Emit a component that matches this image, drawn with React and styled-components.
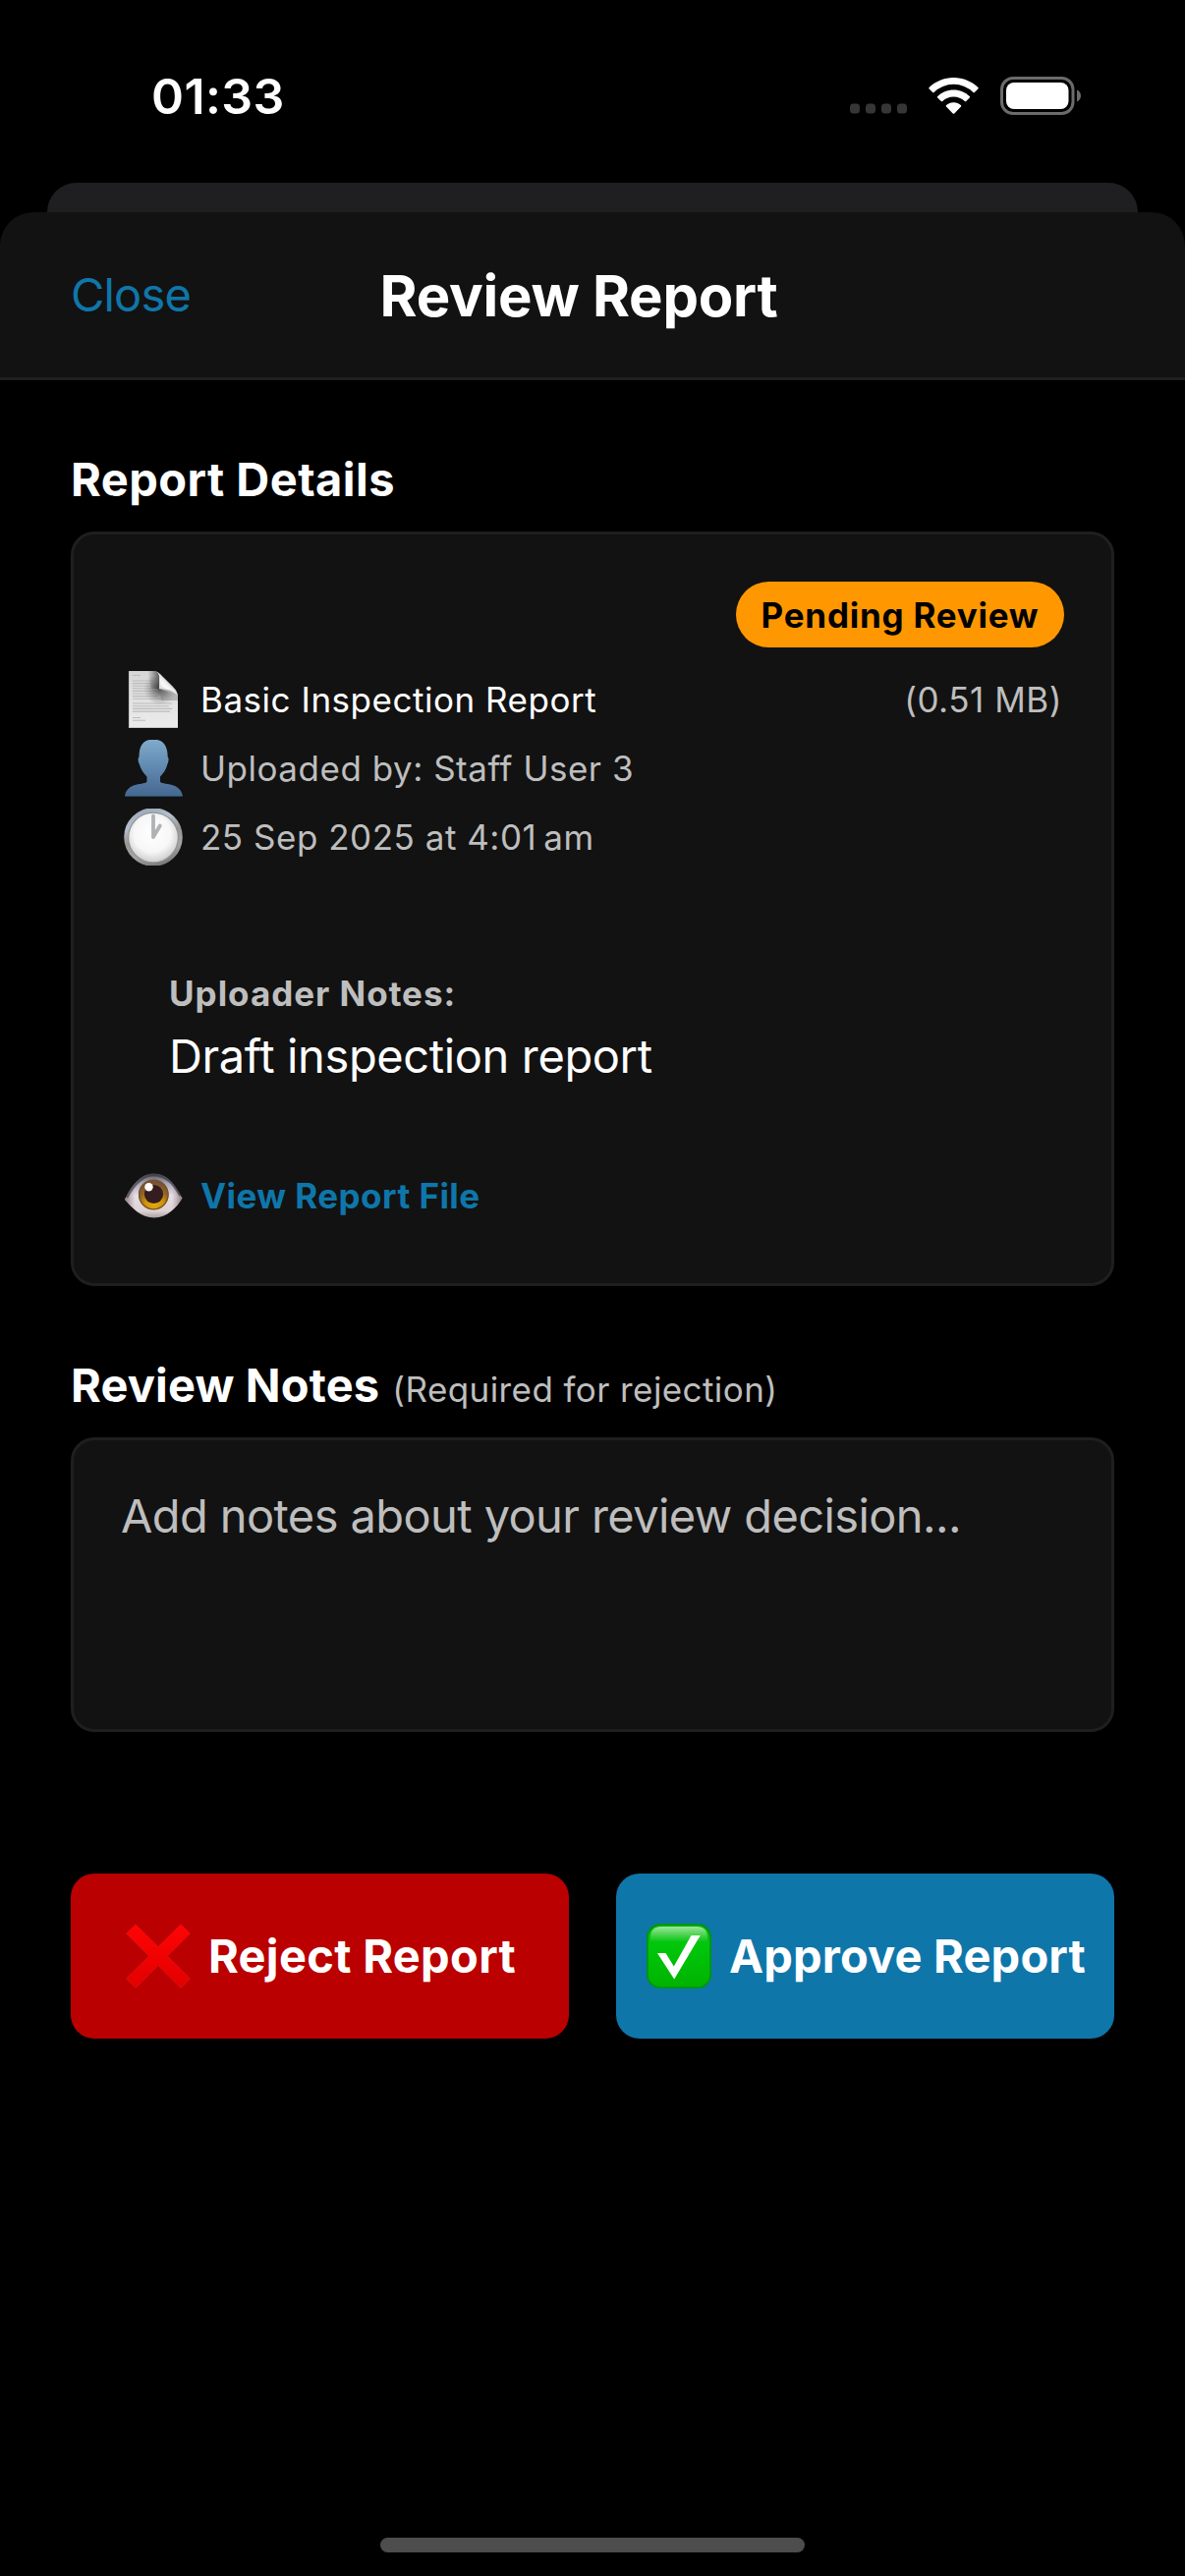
import React from "react";
import styled, { createGlobalStyle } from "styled-components";

const c = {
  bg: "#000000",
  surface: "#121212",
  border: "#1f1f1f",
  sheet: "#1f1f21",
  text: "#ffffff",
  muted: "#bebebe",
  accent: "#0f76aa",
  danger: "#ba0000",
  warning: "#ff9800",
};

const GlobalStyle = createGlobalStyle`
  * { box-sizing: border-box; }
  body {
    margin: 0;
    background: ${c.bg};
    color: ${c.text};
    font-family: Inter, "Liberation Sans", sans-serif;
  }
`;

const Screen = styled.div`
  display: flex;
  flex-direction: column;
  width: 1206px;
  height: 2622px;
  overflow: hidden;
  background: ${c.bg};
`;

const StatusBar = styled.div`
  display: flex;
  align-items: center;
  justify-content: space-between;
  height: 186px;
  padding: 9px 106px 0 154px;
`;

const Clock = styled.span`
  font-size: 50px;
  line-height: 60px;
  font-weight: 600;
  letter-spacing: 0.4px;
`;

const StatusIcons = styled.div`
  display: flex;
  align-items: center;
  gap: 22px;

  svg { display: block; }
`;

const BackSheet = styled.div`
  height: 30px;
  margin: 0 48px;
  border-radius: 30px 30px 0 0;
  background: ${c.sheet};
`;

const Header = styled.header`
  display: flex;
  align-items: center;
  justify-content: space-between;
  height: 171px;
  padding: 0 72px;
  border-bottom: 3px solid ${c.border};
  border-radius: 34px 34px 0 0;
  background: ${c.surface};
`;

const CloseButton = styled.button`
  padding: 0;
  border: 0;
  background: none;
  color: ${c.accent};
  font: inherit;
  font-size: 47px;
  line-height: 60px;
  letter-spacing: -0.8px;
`;

const Title = styled.h1`
  margin: 0;
  padding-top: 1px;
  font-size: 58px;
  line-height: 72px;
  font-weight: 700;
  letter-spacing: -0.25px;
`;

const HeaderSpacer = styled.div`
  width: 150px;
`;

const Body = styled.main`
  display: flex;
  flex: 1;
  flex-direction: column;
  padding: 71px 72px 0;
`;

const SectionTitle = styled.h2`
  margin: 0 0 23px;
  font-size: 47px;
  line-height: 60px;
  font-weight: 700;
  letter-spacing: ${(p) => p.$tracking};
`;

const Hint = styled.span`
  margin-left: 13px;
  color: ${c.muted};
  font-size: 35px;
  line-height: 1;
  font-weight: 400;
  letter-spacing: 0.41px;
`;

const Card = styled.section`
  display: flex;
  flex-direction: column;
  height: 768px;
  margin-bottom: 71px;
  padding: 48px;
  border: 3px solid ${c.border};
  border-radius: 24px;
  background: ${c.surface};
`;

const Badge = styled.div`
  display: flex;
  justify-content: center;
  align-self: flex-end;
  width: 334px;
  height: 67px;
  margin-bottom: 18px;
  border-radius: 34px;
  background: ${c.warning};
  color: #000;
  font-size: 35px;
  line-height: 68px;
  font-weight: 700;
  letter-spacing: 0.76px;
`;

const Row = styled.div`
  display: flex;
  align-items: center;
  height: 70px;
  padding-left: 3px;
  font-size: 35px;
  line-height: 70px;
  font-weight: ${(p) => (p.$link ? 700 : 400)};
  letter-spacing: ${(p) => (p.$link ? "0.45px" : "0.52px")};
  color: ${(p) => (p.$link ? c.accent : p.$primary ? c.text : c.muted)};
`;

const RowIcon = styled.svg`
  flex: none;
  width: 60px;
  height: 58px;
  margin-right: 18px;
`;

const FileSize = styled.span`
  margin-left: auto;
  padding-right: 2px;
  color: ${c.muted};
`;

const UploaderNotes = styled.div`
  display: flex;
  flex-direction: column;
  margin: 97px 0 71px;
  padding-left: 49px;
`;

const NotesLabel = styled.span`
  color: ${c.muted};
  font-size: 35px;
  line-height: 54px;
  font-weight: 700;
  letter-spacing: 0.98px;
`;

const NotesText = styled.span`
  padding-top: 1px;
  font-size: 47px;
  line-height: 72px;
  letter-spacing: -0.38px;
`;

const NotesInput = styled.textarea`
  display: block;
  width: 100%;
  height: 300px;
  margin: 0 0 144px;
  padding: 47px 48px;
  border: 3px solid ${c.border};
  border-radius: 24px;
  outline: 0;
  resize: none;
  background: ${c.surface};
  color: ${c.text};
  font: inherit;
  font-size: 47px;
  line-height: 60px;
  letter-spacing: -0.6px;

  &::placeholder {
    color: ${c.muted};
    opacity: 1;
  }
`;

const Actions = styled.div`
  display: grid;
  grid-template-columns: 1fr 1fr;
  gap: 48px;
`;

const ActionButton = styled.button`
  display: flex;
  align-items: center;
  justify-content: center;
  gap: 18px;
  height: 168px;
  padding: 0 0 0 2px;
  border: 0;
  border-radius: 24px;
  background: ${(p) => (p.$danger ? c.danger : c.accent)};
  color: ${c.text};
  font: inherit;
  font-size: 47px;
  line-height: 60px;
  font-weight: 700;
  letter-spacing: ${(p) => (p.$danger ? "0.32px" : "0.15px")};
`;

const HomeIndicator = styled.div`
  align-self: center;
  width: 432px;
  height: 15px;
  margin-bottom: 24px;
  border-radius: 8px;
  background: #4d4d4d;
`;

const SignalIcon = () => (
  <svg width="58" height="37" viewBox="0 0 58 37">
    {[0, 16, 32, 48].map((x) => (
      <rect key={x} x={x} y="26.5" width="10" height="10" rx="3.5" fill="#363636" />
    ))}
  </svg>
);

const WifiIcon = () => (
  <svg width="51" height="37" viewBox="0 0 51 37" fill="#fff">
    <path d="M25.5 0C35.2 0 44 3.8 50.4 10.1Q51 10.8 50.4 11.5L46.9 15Q46.2 15.6 45.5 15A28.6 28.6 0 0 0 5.5 15Q4.8 15.6 4.1 15L.6 11.5Q0 10.8.6 10.1C7 3.8 15.8 0 25.5 0Z" />
    <path d="M25.5 12.5C31.9 12.5 37.6 15 41.8 19.1Q42.4 19.8 41.8 20.4L38.2 24Q37.5 24.6 36.8 24A16.3 16.3 0 0 0 14.2 24Q13.5 24.6 12.8 24L9.2 20.4Q8.6 19.8 9.2 19.1C13.4 15 19.1 12.5 25.5 12.5Z" />
    <path d="M25.5 25.2C28.4 25.2 31 26.3 32.9 28Q33.6 28.7 33 29.4L26.3 36.4Q25.5 37.2 24.7 36.4L18 29.4Q17.4 28.7 18.1 28C20 26.3 22.6 25.2 25.5 25.2Z" />
  </svg>
);

const BatteryIcon = () => (
  <svg width="82" height="39" viewBox="0 0 82 39">
    <rect x="1.5" y="1.5" width="72.5" height="36" rx="11.5" fill="none" stroke="#6b6b6b" strokeWidth="3" />
    <rect x="6" y="6" width="63.5" height="27" rx="8" fill="#fff" />
    <path d="M78 13.5C80.4 14.6 82 16.7 82 19.5S80.4 24.4 78 25.5Z" fill="#6b6b6b" />
  </svg>
);

const DocumentIcon = () => (
  <RowIcon viewBox="0 0 60 58">
    <defs>
      <linearGradient id="page" x1="0" y1="0" x2="0" y2="1">
        <stop offset="0" stopColor="#d6d6d6" />
        <stop offset="1" stopColor="#ececec" />
      </linearGradient>
      <linearGradient id="curl" x1="0.1" y1="0.9" x2="0.6" y2="0.3">
        <stop offset="0" stopColor="#bdbdbd" />
        <stop offset="0.5" stopColor="#fafafa" />
        <stop offset="1" stopColor="#dcdcdc" />
      </linearGradient>
      <radialGradient id="curlShade" cx="37" cy="18" r="17" gradientUnits="userSpaceOnUse">
        <stop offset="0" stopColor="#333" stopOpacity="0.85" />
        <stop offset="0.4" stopColor="#555" stopOpacity="0.6" />
        <stop offset="1" stopColor="#888" stopOpacity="0" />
      </radialGradient>
      <linearGradient id="topShade" x1="24" y1="0" x2="37" y2="0" gradientUnits="userSpaceOnUse">
        <stop offset="0" stopColor="#555" stopOpacity="0" />
        <stop offset="1" stopColor="#333" stopOpacity="0.85" />
      </linearGradient>
    </defs>
    <path d="M5 0H30C35 0 37 3 42 8L50 16Q55 21 55 26V58H5Z" fill="url(#page)" />
    <g stroke="#bcbcbc" strokeWidth="1.1">
      <path d="M9 4.500H17M9 10H31M9 12.600H30M9 15.200H31M9 17.800H30M9 20.400H33M9 23H31M9 25.600H34M9 28.200H40M9 33H49M9 35.700H46M9 38.400H49M9 41.100H47M9 47.500H17M9 50.300H22" />
    </g>
    <path d="M24 0H30C34 0 36 3 36 6V18H28Z" fill="url(#topShade)" />
    <path d="M20 6H36V18L55 24V36H20Z" fill="url(#curlShade)" />
    <path d="M37 18Q47 17 55 25V30H38Z" fill="#777" opacity="0.4" />
    <path d="M34 1Q38 4 37 18Q47 17 54.5 24Z" fill="url(#curl)" />
    <path d="M5.4 0V57.5H55" fill="none" stroke="#bfbfbf" strokeWidth="0.8" />
  </RowIcon>
);

const PersonIcon = () => (
  <RowIcon viewBox="0 0 60 58">
    <defs>
      <linearGradient id="person" x1="0" y1="0" x2="0" y2="1">
        <stop offset="0" stopColor="#80aacb" />
        <stop offset="0.4" stopColor="#668fb4" />
        <stop offset="1" stopColor="#456791" />
      </linearGradient>
    </defs>
    <path
      d="M26 0H34C41 1.5 44.5 7 44.7 17.5C46 18.2 45.7 22.5 44.5 24.5C43 30.5 40 34.5 37 37.500V42.5C38.5 46.5 57.5 42 60 57.5H1C3.5 42 22 46.5 23.5 42.5V37.5C20.5 34.5 17.5 30.5 15.7 24.5C14.4 22.5 14.2 18.2 15.5 17.5C15.6 7 19 1.5 26 0Z"
      fill="url(#person)"
    />
    <path d="M2 56.7H59" stroke="#3b7290" strokeWidth="1" />
  </RowIcon>
);

const ClockIcon = () => (
  <RowIcon viewBox="0 0 60 58">
    <defs>
      <linearGradient id="rim" x1="0.3" y1="0" x2="0.6" y2="1">
        <stop offset="0" stopColor="#99a5b8" />
        <stop offset="0.25" stopColor="#b7c0ce" />
        <stop offset="0.5" stopColor="#999694" />
        <stop offset="0.75" stopColor="#a8a4a1" />
        <stop offset="1" stopColor="#777" />
      </linearGradient>
      <radialGradient id="face" cx="0.48" cy="0.42" r="0.58">
        <stop offset="0" stopColor="#fff" />
        <stop offset="0.65" stopColor="#f7f7f7" />
        <stop offset="1" stopColor="#cfcfcf" />
      </radialGradient>
    </defs>
    <circle cx="30" cy="29" r="29.8" fill="url(#rim)" />
    <circle cx="30" cy="29.5" r="26" fill="#8f9399" />
    <circle cx="30" cy="29.5" r="24.8" fill="url(#face)" />
    <path d="M30 7.5V29L36.8 17.5" fill="none" stroke="#b0b3b5" strokeWidth="3.8" strokeLinecap="round" strokeLinejoin="round" />
  </RowIcon>
);

const EyeIcon = () => (
  <RowIcon viewBox="0 0 60 58">
    <defs>
      <linearGradient id="lid" x1="0" y1="0" x2="0" y2="1">
        <stop offset="0" stopColor="#55545c" />
        <stop offset="0.22" stopColor="#a9a5b6" />
        <stop offset="0.5" stopColor="#e6dfe5" />
        <stop offset="0.85" stopColor="#ddd2d4" />
        <stop offset="1" stopColor="#aaa0a2" />
      </linearGradient>
      <linearGradient id="lidSide" x1="0" y1="0" x2="1" y2="0">
        <stop offset="0" stopColor="#694b50" stopOpacity="0.7" />
        <stop offset="0.18" stopColor="#8b7480" stopOpacity="0" />
        <stop offset="0.82" stopColor="#8b7480" stopOpacity="0" />
        <stop offset="1" stopColor="#694b50" stopOpacity="0.7" />
      </linearGradient>
      <radialGradient id="iris" cx="0.52" cy="0.8" r="0.72">
        <stop offset="0" stopColor="#e8ac0c" />
        <stop offset="0.4" stopColor="#d0930c" />
        <stop offset="0.7" stopColor="#8f6425" />
        <stop offset="1" stopColor="#75503b" />
      </radialGradient>
    </defs>
    <path d="M1 33C7 21 16 6.5 30 6.5C46 6.5 52 19 59.5 31.5C54 41 44 51.5 31 51.5C17 51.5 8 41 1 33Z" fill="url(#lid)" />
    <path d="M1 33C7 21 16 6.5 30 6.5C46 6.5 52 19 59.5 31.5C54 41 44 51.5 31 51.5C17 51.5 8 41 1 33Z" fill="url(#lidSide)" />
    <path d="M3 31C9 20 17 8.5 30 8C44 8 51 18 57.5 29" fill="none" stroke="#34333a" strokeWidth="2.5" opacity="0.65" />
    <circle cx="30.3" cy="28" r="15.3" fill="url(#iris)" />
    <circle cx="30.3" cy="28" r="14.8" fill="none" stroke="#785425" strokeWidth="1.2" />
    <circle cx="30.5" cy="27.5" r="9.6" fill="#351c1e" />
    <circle cx="25.5" cy="20.3" r="4.2" fill="#fff" />
  </RowIcon>
);

const CrossIcon = () => (
  <svg width="66" height="66" viewBox="0 0 66 66">
    <defs>
      <linearGradient id="cross" x1="0" y1="0" x2="0" y2="1">
        <stop offset="0" stopColor="#ff0404" />
        <stop offset="1" stopColor="#e20000" />
      </linearGradient>
    </defs>
    <path
      d="M.5 10L10 .7L33 23.5L56 .7L65.500 10L42.5 33L65.5 56L56 65.5L33 42.5L10 65.5L.5 56L23.5 33Z"
      fill="url(#cross)"
      stroke="#e31a1a"
      strokeWidth="0.6"
    />
  </svg>
);

const CheckIcon = () => (
  <svg width="66" height="66" viewBox="0 0 66 66">
    <defs>
      <linearGradient id="tile" x1="0" y1="0" x2="0" y2="1">
        <stop offset="0" stopColor="#00ba00" />
        <stop offset="0.3" stopColor="#00c70c" />
        <stop offset="1" stopColor="#00b300" />
      </linearGradient>
      <linearGradient id="gloss" x1="0" y1="0" x2="0" y2="1">
        <stop offset="0" stopColor="#fff" stopOpacity="0.62" />
        <stop offset="1" stopColor="#fff" stopOpacity="0" />
      </linearGradient>
    </defs>
    <rect width="66" height="66" rx="14" fill="#019414" />
    <rect x="1.8" y="1.8" width="62.4" height="62.4" rx="12.5" fill="url(#tile)" />
    <path d="M4 19V13.5C4 7 8 3 14.5 3H51.5C58 3 62 7 62 13.5V19Z" fill="url(#gloss)" />
    <path d="M11 30H19.5L27.8 43.5L45.5 12H54.7L28.2 56.5Z" fill="#fff" />
  </svg>
);

export default function App() {
  return (
    <Screen>
      <GlobalStyle />
      <StatusBar>
        <Clock>01:33</Clock>
        <StatusIcons>
          <SignalIcon />
          <WifiIcon />
          <BatteryIcon />
        </StatusIcons>
      </StatusBar>
      <BackSheet />
      <Header>
        <CloseButton>Close</CloseButton>
        <Title>Review Report</Title>
        <HeaderSpacer />
      </Header>
      <Body>
        <SectionTitle $tracking="0.46px">Report Details</SectionTitle>
        <Card>
          <Badge>Pending Review</Badge>
          <Row $primary>
            <DocumentIcon />
            <span>Basic Inspection Report</span>
            <FileSize>(0.51 MB)</FileSize>
          </Row>
          <Row>
            <PersonIcon />
            <span>Uploaded by: Staff User 3</span>
          </Row>
          <Row>
            <ClockIcon />
            <span>{"25 Sep 2025 at 4:01\u202fam"}</span>
          </Row>
          <UploaderNotes>
            <NotesLabel>Uploader Notes:</NotesLabel>
            <NotesText>Draft inspection report</NotesText>
          </UploaderNotes>
          <Row $link>
            <EyeIcon />
            <span>View Report File</span>
          </Row>
        </Card>
        <SectionTitle $tracking="0.15px">
          Review Notes
          <Hint>(Required for rejection)</Hint>
        </SectionTitle>
        <NotesInput placeholder="Add notes about your review decision..." />
        <Actions>
          <ActionButton $danger>
            <CrossIcon />
            <span>Reject Report</span>
          </ActionButton>
          <ActionButton>
            <CheckIcon />
            <span>Approve Report</span>
          </ActionButton>
        </Actions>
      </Body>
      <HomeIndicator />
    </Screen>
  );
}
